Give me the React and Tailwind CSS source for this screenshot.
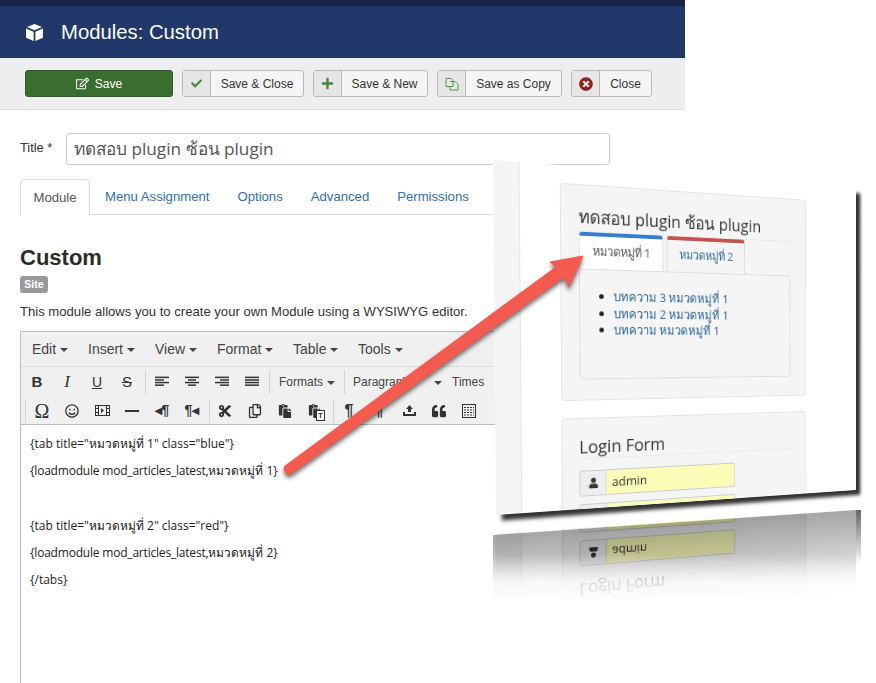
import { FaCheck, FaPlus, FaTimesCircle, FaRegEdit, FaRegSmile, FaCut, FaRegCopy, FaPaste, FaQuoteLeft, FaUser, FaLock } from "react-icons/fa";

const MENU = ["Edit", "Insert", "View", "Format", "Table", "Tools"];

const TABS = ["Menu Assignment", "Options", "Advanced", "Permissions"];

const LINES = [
  { text: '{tab title="หมวดหมู่ที่ 1" class="blue"}' },
  { tight: "{loadmodule mod_articles_latest,", text: "หมวดหมู่ที่ 1}" },
  { text: "" },
  { text: '{tab title="หมวดหมู่ที่ 2" class="red"}' },
  { tight: "{loadmodule mod_articles_latest,", text: "หมวดหมู่ที่ 2}" },
  { text: "{/tabs}" },
];

const ARTICLES = ["บทความ 3 หมวดหมู่ที่ 1", "บทความ 2 หมวดหมู่ที่ 1", "บทความ หมวดหมู่ที่ 1"];

function Cube() {
  return (
    <svg width="19" height="19" viewBox="0 0 19 19" fill="#fff">
      <path d="M9.5 1 L17 4 L9.5 7.2 L2 4 Z" />
      <path d="M1 5.6 L8.6 8.8 V18 L1 14.8 Z" />
      <path d="M18 5.6 L10.4 8.8 V18 L18 14.8 Z" />
    </svg>
  );
}

function CopyGreen() {
  return (
    <svg width="14" height="14" viewBox="0 0 14 14" fill="none" stroke="#4f9a45" strokeWidth="1">
      <path d="M1 1.5 H6 L8 3.5 V9.5 H1 Z" />
      <path d="M5 4.5 H10 L13 7.5 V13 H5 V9.5" />
    </svg>
  );
}

function ToolButton({ icon, label, className }) {
  return (
    <div className={`flex h-[27px] items-stretch rounded-[3px] border border-[#b9b9b9] bg-[#f5f5f5] text-[12px] text-[#333] ${className}`}>
      <span className="flex w-[28px] items-center justify-center border-r border-[#b9b9b9] bg-[#e6e6e6]">{icon}</span>
      <span className="flex flex-1 items-center justify-center">{label}</span>
    </div>
  );
}

function Align({ rows }) {
  return (
    <svg width="14" height="12" viewBox="0 0 14 12" fill="#333">
      {rows.map((r, i) => (
        <rect key={i} x={r[0]} y={i * 2.6 + 0.6} width={r[1]} height="1.5" />
      ))}
    </svg>
  );
}

function Caret() {
  return <span className="ml-1 inline-block border-x-[4px] border-t-[4px] border-x-transparent border-t-[#444] align-middle" />;
}

function Cell({ children }) {
  return <span className="flex h-full w-[30px] shrink-0 items-center justify-center text-[14px] text-[#333]">{children}</span>;
}

function Sep({ className }) {
  return <span className={`h-[24px] w-px shrink-0 bg-[#d4d4d4] ${className}`} />;
}

function Editor() {
  return (
    <div className="mt-[11px] h-[400px] w-[665px] border-y border-l border-[#bdbdbd]">
      <div className="flex h-[35px] items-center border-b border-[#dddddd] bg-[#f0f0f0] pl-[11px] text-[14px] text-[#444]">
        {MENU.map((m, i) => (
          <span
            key={m}
            className={["w-[56px]", "w-[67px]", "w-[62px]", "w-[76px]", "w-[65px]", "w-[60px]"][i]}
          >
            {m}
            <Caret />
          </span>
        ))}
      </div>
      <div className="bg-[#f0f0f0]">
        <div className="flex h-[30px] items-center pl-px">
          <Cell><span className="text-[15px] font-bold">B</span></Cell>
          <Cell><span className="font-['Liberation_Serif'] text-[17px] italic">I</span></Cell>
          <Cell><span className="text-[14px] underline">U</span></Cell>
          <Cell><span className="text-[15px] line-through">S</span></Cell>
          <Sep className="ml-[3px]" />
          <span className="w-[1px]" />
          <Cell><Align rows={[[0, 14], [0, 9], [0, 14], [0, 9], [0, 0]]} /></Cell>
          <Cell><Align rows={[[0, 14], [3, 8], [0, 14], [3, 8], [0, 0]]} /></Cell>
          <Cell><Align rows={[[0, 14], [5, 9], [0, 14], [5, 9], [0, 0]]} /></Cell>
          <Cell><Align rows={[[0, 14], [0, 14], [0, 14], [0, 14], [0, 0]]} /></Cell>
          <Sep className="ml-[2px]" />
          <span className="ml-[9px] w-[65px] shrink-0 text-[12px] text-[#444]">Formats<Caret /></span>
          <Sep />
          <span className="ml-[8px] w-[99px] shrink-0 text-[12px] text-[#444]">Paragraph<span className="ml-[21px]"><Caret /></span></span>
          <span className="text-[12px] text-[#444]">Times</span>
        </div>
        <div className="flex h-[27px] items-center pl-[4px]">
          <Sep className="mr-[1px]" />
          <Cell><span className="font-['Liberation_Serif'] text-[20px]">Ω</span></Cell>
          <Cell><FaRegSmile /></Cell>
          <Cell>
            <svg width="15" height="13" viewBox="0 0 15 13" fill="none" stroke="#333">
              <rect x="0.5" y="1.5" width="14" height="10" />
              <path d="M3.5 1.5 V11.5 M11.5 1.5 V11.5 M0.5 4.5 H3.5 M0.5 8.5 H3.5 M11.5 4.5 H14.5 M11.5 8.5 H14.5" />
              <path d="M6 4 L9 6.5 L6 9 Z" fill="#333" stroke="none" />
            </svg>
          </Cell>
          <Cell><span className="h-[2px] w-[14px] bg-[#333]" /></Cell>
          <Cell><span className="font-bold">◂¶</span></Cell>
          <Cell><span className="font-bold">¶◂</span></Cell>
          <Sep className="ml-[2px]" />
          <Cell><FaCut /></Cell>
          <Cell><FaRegCopy /></Cell>
          <Cell><FaPaste /></Cell>
          <Cell>
            <span className="relative flex">
              <FaPaste />
              <span className="absolute right-[-2px] bottom-[-2px] bg-white px-[1px] text-[8px] leading-[9px] font-bold outline outline-[#333]">T</span>
            </span>
          </Cell>
          <Sep className="ml-[3px]" />
          <Cell><span className="text-[16px] font-bold">¶</span></Cell>
          <Cell><span className="text-[16px] font-bold">¶</span></Cell>
          <Cell>
            <svg width="15" height="13" viewBox="0 0 15 13" fill="#333">
              <path d="M7.5 1 L11 5 H9 V8 H6 V5 H4 Z" />
              <path d="M1 8 H3 V10 H12 V8 H14 V12 H1 Z" />
            </svg>
          </Cell>
          <Cell><FaQuoteLeft /></Cell>
          <Cell>
            <svg width="14" height="14" viewBox="0 0 14 14" fill="none" stroke="#333">
              <rect x="0.5" y="0.5" width="13" height="13" />
              <path d="M2 3.5 H12 M2 6 H12 M2 8.5 H12 M2 11 H12" strokeDasharray="2 1" />
            </svg>
          </Cell>
        </div>
      </div>
      <div className="border-t border-[#bdbdbd] pt-[11px] pl-[9px] font-['Open_Sans',sans-serif] text-[12px] leading-[15px] text-[#222]">
        {LINES.map((line, i) => (
          <p key={i} className="mb-[12.3px] h-[15px]">
            {line.tight && <span className="tracking-[-0.2px]">{line.tight}</span>}
            {line.text}
          </p>
        ))}
      </div>
    </div>
  );
}

function TabsCard() {
  return (
    <div className="h-[224px] w-[293px] rounded-[4px] border border-[#e3e3e3] bg-[#f5f5f5] px-[19px]">
      <div className="h-[48px] border-b border-[#eaeaea] pt-[19px] text-[18.4px] leading-[25px] font-medium text-[#333]">
        ทดสอบ plugin ซ้อน plugin
      </div>
      <div className="flex h-[38px] gap-[4px] text-[12.8px]">
        <div className="flex w-[95px] items-center justify-center rounded-t-[4px] border-x border-[#ddd] border-t-[4px] border-t-[#337ecf] bg-white pb-[3px] text-[#555]">หมวดหมู่ที่ 1</div>
        <div className="flex w-[95px] items-center justify-center rounded-t-[4px] border-x border-[#ddd] border-t-[4px] border-t-[#c9504f] pb-[3px] text-[#3a6ea5]">หมวดหมู่ที่ 2</div>
      </div>
      <div className="h-[115px] w-[252px] rounded-b-[4px] border border-[#dddddd] pt-[19px] pl-[37px] text-[13.2px] leading-[17.5px] text-[#222]">
        <ul className="list-disc">
          {ARTICLES.map((a) => (
            <li key={a}><span className="text-[#2a6496]">{a}</span></li>
          ))}
        </ul>
      </div>
    </div>
  );
}

function LoginCard() {
  return (
    <div className="mt-[18px] h-[200px] w-[293px] rounded-[4px] border border-[#e3e3e3] bg-[#f5f5f5] px-[18px]">
      <div className="border-b border-[#eaeaea] pt-[17px] text-[18.5px] leading-[24px] text-[#333]">Login Form</div>
      <div className="mt-[12px] flex h-[27px]">
        <span className="flex w-[30px] items-center justify-center rounded-l-[3px] border border-[#cccccc] bg-[#eeeeee] text-[11px] text-[#333]"><FaUser /></span>
        <span className="flex w-[152px] items-center rounded-r-[3px] border-y border-r border-[#cccccc] bg-[#fafcb8] pl-[6px] text-[13.5px] text-[#333]">admin</span>
      </div>
      <div className="mt-[8px] flex h-[27px]">
        <span className="flex w-[30px] items-center justify-center rounded-l-[3px] border border-[#cccccc] bg-[#eeeeee] text-[11px] text-[#333]"><FaLock /></span>
        <span className="w-[152px] rounded-r-[3px] border-y border-r border-[#cccccc] bg-[#fafcb8]" />
      </div>
    </div>
  );
}

function PanelBody({ mirrored }) {
  return (
    <div className="flex h-full font-['Open_Sans',sans-serif]">
      <div className="w-[27px] shrink-0 border-r border-[#e3e6e6] bg-[#f4f5f6]" />
      <div className="ml-[42px] pt-[18px]">
        {mirrored ? <div className="h-[224px]" /> : <TabsCard />}
        <LoginCard />
      </div>
    </div>
  );
}

export default function App() {
  return (
    <div className="relative h-[683px] w-[876px] overflow-hidden bg-white font-['Liberation_Sans',sans-serif]">
      <div className="w-[685px]">
        <div className="h-[6px] bg-[#16244a]" />
        <div className="flex h-[52px] items-center gap-[17px] bg-[#20386a] pl-[25px] text-[20.3px] text-white">
          <Cube />
          <span>Modules: Custom</span>
        </div>
        <div className="flex h-[52px] items-start gap-[9px] border-b border-[#dddddd] bg-[#eeeeee] pt-[12px] pl-[25px]">
          <div className="flex h-[27px] w-[148px] items-center justify-center gap-[6px] rounded-[3px] border border-[#2f5c27] bg-[#3a6e2f] text-[12px] text-white">
            <FaRegEdit className="text-[13px]" />
            Save
          </div>
          <ToolButton icon={<FaCheck className="text-[11px] text-[#46883a]" />} label="Save & Close" className="w-[122px]" />
          <ToolButton icon={<FaPlus className="text-[13px] text-[#46883a]" />} label="Save & New" className="w-[115px]" />
          <ToolButton icon={<CopyGreen />} label="Save as Copy" className="w-[125px]" />
          <ToolButton icon={<FaTimesCircle className="text-[14px] text-[#8f2020]" />} label="Close" className="w-[81px]" />
        </div>
        <div className="px-[20px]">
          <div className="mt-[23px] flex items-start">
            <label className="mt-[5px] w-[46px] text-[12.8px] text-[#333]">Title *</label>
            <div className="flex h-[32px] w-[544px] items-center rounded-[3px] border border-[#cccccc] pl-[7px] font-['Open_Sans',sans-serif] text-[17.2px] text-[#555]">
              ทดสอบ plugin ซ้อน plugin
            </div>
          </div>
          <div className="mt-[14px] flex h-[36px] w-[645px] border-b border-[#dddddd] text-[13.15px]">
            <div className="flex h-[36px] w-[70px] items-center justify-center rounded-t-[4px] border-x border-t border-[#dddddd] bg-white text-[#555]">Module</div>
            {TABS.map((t, i) => (
              <span key={t} className={`flex items-center text-[#3071a9] ${["ml-[15px]", "ml-[28px]", "ml-[28px]", "ml-[28px]"][i]}`}>{t}</span>
            ))}
          </div>
          <h1 className="mt-[30px] text-[22px] leading-[26px] font-bold text-[#2b2b2b]">Custom</h1>
          <span className="mt-[5px] block h-[17px] w-[28px] rounded-[3px] bg-[#999999] text-center text-[10.5px] leading-[17px] font-bold text-white">Site</span>
          <p className="mt-[11px] text-[13.1px] leading-[16px] text-[#333]">This module allows you to create your own Module using a WYSIWYG editor.</p>
          <Editor />
        </div>
      </div>

      {/* reflection of the pasted screenshot, same perspective flipped over its bottom edge */}
      <div aria-hidden="true" className="absolute top-[490px] left-[490px] h-[108px] w-[386px] overflow-hidden">
        <div className="absolute top-[-330px] left-[3px] h-[355px] w-[430px] origin-top-left overflow-hidden bg-white [transform:matrix3d(0.99293,0.08617,0,0.00040974,0.00852,-0.9924,0,0.00002347,0,0,1,0,0,729.2,0,1)]">
          <PanelBody mirrored />
        </div>
        <div className="absolute inset-0 bg-[linear-gradient(176deg,#a8a8a8_36%,#ffffff_100%)] mix-blend-multiply [clip-path:polygon(3px_45px,366px_20px,366px_100%,3px_100%)]" />
        <div className="absolute top-[20px] left-[366px] h-[55px] w-[5px] bg-[linear-gradient(to_bottom,#666666,rgba(255,255,255,0))]" />
        <div className="absolute inset-0 bg-[linear-gradient(to_bottom,rgba(255,255,255,0)_60%,rgba(255,255,255,0.8)_85%,rgba(255,255,255,0.9)_100%)]" />
      </div>

      <div className="absolute top-[160px] left-[493px] h-[355px] w-[430px] origin-top-left overflow-hidden bg-white shadow-[6px_6px_4px_#333] [transform:matrix3d(0.99293,0.07658,0,0.00040974,0.00852,1.00834,0,0.00002347,0,0,1,0,0,0,0,1)]">
        <PanelBody />
      </div>

      <svg className="pointer-events-none absolute top-0 left-0 [filter:drop-shadow(0_3px_2px_rgba(0,0,0,0.55))]" width="876" height="683" viewBox="0 0 876 683">
        <path
          d="M285 466 L556 267 L550 262 L583 256 L569 287 L564 277 L291 474 Q287 476 285 472 Q283 468 285 466 Z"
          fill="#f55a4e"
          stroke="#f55a4e"
          strokeWidth="1"
          strokeLinejoin="round"
        />
      </svg>
    </div>
  );
}
